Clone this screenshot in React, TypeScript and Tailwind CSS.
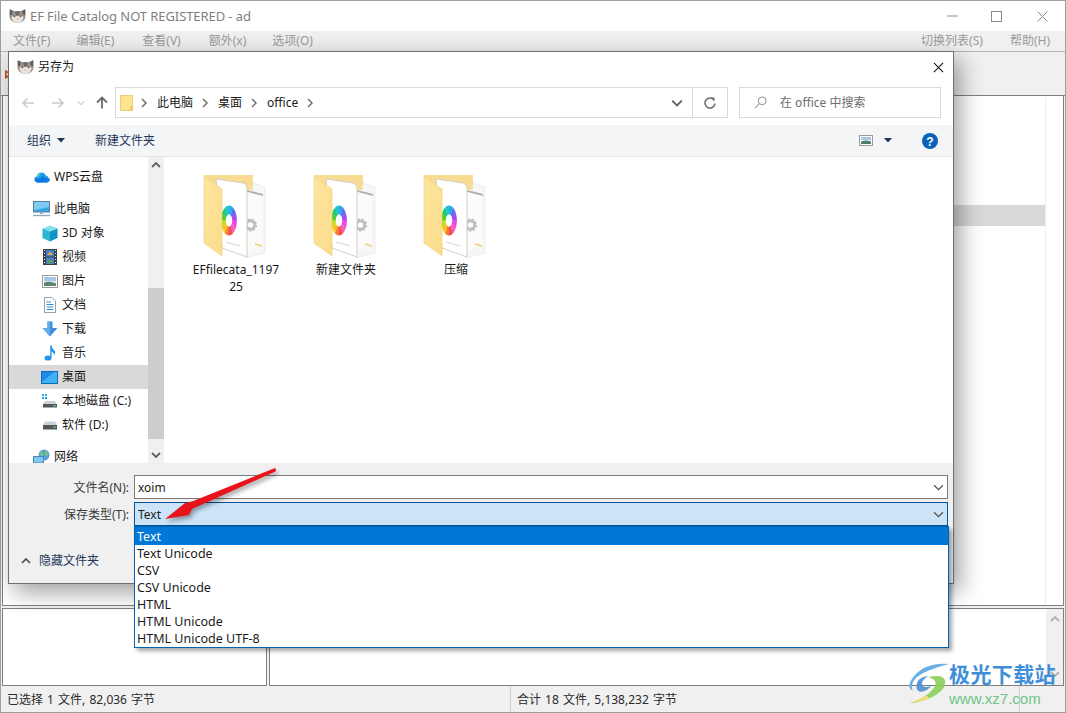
import React from "react";

function Cat({ className }: { className?: string }) {
  return (
    <svg viewBox="0 0 18 16" className={className}>
      <path d="M0.5 0.5 L6 3 H12 L17.5 0.5 L17.5 9 Q16 15 9 15.5 Q2 15 0.5 9 Z" fill="#97908f" />
      <path d="M1 1 L4 3 L3 7 L1 7 Z M17 1 L14 3 L15 7 L17 7 Z" fill="#5f5a5b" />
      <path d="M6.5 3 H11.5 L10.5 7.5 H7.5 Z" fill="#6d6766" />
      <path d="M2.5 9 Q5 7 9 8 Q13 7 15.5 9 Q15 14.5 9 15.5 Q3 14.5 2.5 9 Z" fill="#ece2dc" />
      <circle cx="5.8" cy="8.2" r="1.1" fill="#5d6a4a" />
      <circle cx="12.2" cy="8.2" r="1.1" fill="#5d6a4a" />
      <path d="M8 11 H10 L9 12.2 Z" fill="#c98a8a" />
    </svg>
  );
}

function Chev({ dir = "down", className, color = "#606060", w = 1.5 }: { dir?: "down" | "up" | "right"; className?: string; color?: string; w?: number }) {
  const d = dir === "down" ? "M1 3 L5 7 L9 3" : dir === "up" ? "M1 7 L5 3 L9 7" : "M3 1 L7 5 L3 9";
  return (
    <svg viewBox="0 0 10 10" className={className}>
      <path d={d} fill="none" stroke={color} strokeWidth={w} />
    </svg>
  );
}

function Caret({ className }: { className?: string }) {
  return (
    <svg viewBox="0 0 8 5" className={className}>
      <path d="M0 0 H8 L4 4.5 Z" fill="#1f3352" />
    </svg>
  );
}

const ringColors = ["#29a9f2", "#5d6ff0", "#a548ee", "#ee46e0", "#f55fc0", "#f8485a", "#f6802a", "#f8c520", "#c8dc20", "#4fd02c", "#20c878", "#22c4d0"];

function FolderIcon() {
  const r = 9;
  const seg = ringColors.map((c, i) => {
    const a0 = ((i * 30 - 90) * Math.PI) / 180;
    const a1 = (((i + 1) * 30 - 90 + 2) * Math.PI) / 180;
    return (
      <path
        key={i}
        d={`M${r * Math.cos(a0)} ${r * Math.sin(a0)} A${r} ${r} 0 0 1 ${r * Math.cos(a1)} ${r * Math.sin(a1)}`}
        fill="none"
        stroke={c}
        strokeWidth="7.5"
      />
    );
  });
  return (
    <svg viewBox="0 0 76 91" className="w-[76px] h-[91px] block mx-auto">
      <defs>
        <linearGradient id="flap" x1="0" y1="0" x2="1" y2="1">
          <stop offset="0" stopColor="#fde6a0" />
          <stop offset="1" stopColor="#fbdc8a" />
        </linearGradient>
      </defs>
      <path d="M8 5 H57 V20 H8 Z" fill="#f7dc92" />
      <path d="M57 13 L69 17 V83 L50 88 Z" fill="#f6f6f6" stroke="#e6e6e6" strokeWidth="0.6" />
      <path d="M51 20 L67 24 V26 L51 22 Z" fill="#aeaeae" />
      <path d="M51 22 L66 26 V76 L51 80 Z" fill="#fbfbfb" />
      <path d="M59 73 L66 75 V77 L59 75 Z" fill="#f2d58c" />
      <g transform="translate(54.5 55)">
        <circle r="5" fill="none" stroke="#b9bec2" strokeWidth="3.2" strokeDasharray="2.2 1.2" />
        <circle r="4" fill="none" stroke="#b9bec2" strokeWidth="2.4" />
      </g>
      <path d="M20 9 L47 13 Q51 14 51 18 V87 L26 78 Z" fill="#ffffff" stroke="#d5cfc2" strokeWidth="1" />
      <g transform="translate(33 50.5) scale(0.62 1.18)">{seg}</g>
      <path d="M30 72 L44 76" stroke="#e2e2e2" strokeWidth="1.5" />
      <path d="M8 7 L26 19 V86 L8 73 Z" fill="url(#flap)" />
      <path d="M8 7 L26 19 V86 L8 73 Z" fill="none" stroke="#f2cf78" strokeWidth="0.6" />
    </svg>
  );
}

const Icons: Record<string, React.ReactNode> = {
  wps: (
    <svg viewBox="0 0 16 12" className="w-[16px] h-[12px]">
      <path d="M3.5 11.5 A3.2 3.2 0 0 1 3 5.2 A4.6 4.6 0 0 1 11.8 4.6 A3.6 3.6 0 0 1 12.5 11.5 Z" fill="#1e9ce8" />
      <path d="M3.5 11.5 A3.2 3.2 0 0 1 1 7 Q6 9 9 5 Q11 8 15.8 7.5 A3.6 3.6 0 0 1 12.5 11.5 Z" fill="#0f78e0" />
      <path d="M3 5.2 A4.6 4.6 0 0 1 7.5 2 Q5 4 4 7 Z" fill="#38d4d8" />
    </svg>
  ),
  pc: (
    <svg viewBox="0 0 18 16" className="w-[18px] h-[16px]">
      <rect x="0.5" y="0.5" width="16" height="10.5" fill="#39a7e8" stroke="#5d7d97" />
      <path d="M1 1 H16 V6 L1 9 Z" fill="#7cccf4" />
      <path d="M7 11 H10 V13 H7 Z" fill="#9ab0c0" />
      <path d="M0 14.5 H17" stroke="#93a9bd" strokeWidth="1.4" />
    </svg>
  ),
  cube: (
    <svg viewBox="0 0 16 17" className="w-[16px] h-[17px]">
      <path d="M8 0.5 L15.5 3.5 L8 6.5 L0.5 3.5 Z" fill="#7fe2ea" />
      <path d="M0.5 3.5 L8 6.5 V16.5 L0.5 13 Z" fill="#28b6d2" />
      <path d="M15.5 3.5 L8 6.5 V16.5 L15.5 13 Z" fill="#1492c4" />
    </svg>
  ),
  video: (
    <svg viewBox="0 0 14 16" className="w-[14px] h-[16px]">
      <rect x="0" y="0" width="14" height="16" fill="#3b3f44" />
      <rect x="3" y="1" width="8" height="6.5" fill="#4580d0" />
      <rect x="3" y="8.5" width="8" height="6.5" fill="#4a86c8" />
      <path d="M4 6 L7 2.5 L10 6 Z" fill="#e8a82c" />
      <path d="M4 14 L7 10 L10 14 Z" fill="#60a040" />
      <path d="M1 1.5 H2 M1 4.5 H2 M1 7.5 H2 M1 10.5 H2 M1 13.5 H2 M12 1.5 H13 M12 4.5 H13 M12 7.5 H13 M12 10.5 H13 M12 13.5 H13" stroke="#e6e6e6" strokeWidth="1.2" />
    </svg>
  ),
  pic: (
    <svg viewBox="0 0 16 13" className="w-[16px] h-[13px]">
      <rect x="0.5" y="0.5" width="15" height="12" fill="#fff" stroke="#9a9a9a" />
      <rect x="2" y="2" width="12" height="4.5" fill="#a7c8e6" />
      <rect x="2" y="6.5" width="12" height="4.5" fill="#dbe6e4" />
      <path d="M2 8 Q7 5.5 14 8.5 V11 H2 Z" fill="#5d8470" />
    </svg>
  ),
  doc: (
    <svg viewBox="0 0 14 16" className="w-[14px] h-[16px]">
      <path d="M1.5 0.5 H9 L12.5 4 V15.5 H1.5 Z" fill="#fff" stroke="#9aa0a6" />
      <path d="M3.5 5 H8 M3.5 7.5 H10.5 M3.5 10 H10.5 M3.5 12.5 H10.5" stroke="#2f8fdc" strokeWidth="1.1" />
    </svg>
  ),
  down: (
    <svg viewBox="0 0 16 16" className="w-[16px] h-[16px]">
      <path d="M5.5 0.5 H10.5 V7 H15.5 L8 15.5 L0.5 7 H5.5 Z" fill="#3d8fdc" />
      <path d="M5.5 0.5 H8 V15.5 L0.5 7 H5.5 Z" fill="#62aceb" />
    </svg>
  ),
  music: (
    <svg viewBox="0 0 12 16" className="w-[12px] h-[16px]">
      <ellipse cx="4" cy="13" rx="3.5" ry="2.6" fill="#1f96e8" />
      <path d="M6.2 13 V0.5 H7.5 Q8 4 11 6 Q11.5 8 10.5 10 Q10 7.5 7.5 6.5 V13 Z" fill="#1f96e8" />
    </svg>
  ),
  desk: (
    <svg viewBox="0 0 17 13" className="w-[17px] h-[13px]">
      <rect x="0.5" y="0.5" width="16" height="12" fill="#1c8ae6" stroke="#0d6cc0" />
      <path d="M1 11 L13 1 H16 V12 H1 Z" fill="#3fb2f2" />
    </svg>
  ),
  c: (
    <svg viewBox="0 0 16 14" className="w-[16px] h-[14px]">
      <path d="M0 0 H2 V2 H0 Z M3 0 H5 V2 H3 Z M0 3 H2 V5 H0 Z M3 3 H5 V5 H3 Z" fill="#1ea7ee" />
      <path d="M3 7 H13 L15 10 H1 Z" fill="#cfd2d4" />
      <rect x="1" y="10" width="14" height="3.5" fill="#55585b" />
      <rect x="11.5" y="11" width="2" height="1.4" fill="#6fe06a" />
    </svg>
  ),
  d: (
    <svg viewBox="0 0 16 9" className="w-[16px] h-[9px]">
      <path d="M3 0.5 H13 L15 4 H1 Z" fill="#cfd2d4" />
      <rect x="1" y="4" width="14" height="4.5" fill="#55585b" />
      <rect x="11.5" y="5.5" width="2" height="1.4" fill="#6fe06a" />
    </svg>
  ),
  net: (
    <svg viewBox="0 0 18 16" className="w-[18px] h-[16px]">
      <circle cx="11" cy="6" r="5.5" fill="#5aa0d8" />
      <path d="M8 2 Q11 4 10 7 Q7 7 6 5 Z M12 1 Q16 3 15 7 L12 6 Z" fill="#7cc47c" />
      <rect x="0.5" y="7.5" width="10" height="6.5" fill="#7cc8f2" stroke="#4d86b4" />
      <path d="M3 15 H8" stroke="#4d86b4" />
    </svg>
  ),
};

function NavRow({ icon, label, sub, active, mt }: { icon: string; label: string; sub?: boolean; active?: boolean; mt?: boolean }) {
  return (
    <div className={`h-[24px] flex items-center shrink-0 text-[#1a1a1a] ${active ? "bg-[#d9d9d9]" : ""} ${mt ? "mt-[8px]" : ""} ${sub ? "pl-[28px]" : "pl-[20px]"}`}>
      <span className="w-[25px] flex items-center justify-center shrink-0">{Icons[icon]}</span>
      <span className="whitespace-nowrap">{label}</span>
    </div>
  );
}

function Crumb({ label }: { label: string }) {
  return (
    <>
      <span className="text-[#1a1a1a] whitespace-nowrap ml-[8px] mr-[6px]">{label}</span>
      <Chev dir="right" className="w-[10px] h-[10px] ml-[1px]" color="#707070" w={1.5} />
    </>
  );
}

function Folder({ label }: { label: string }) {
  return (
    <div className="w-[110px] shrink-0">
      <FolderIcon />
      <div className="w-[92px] ml-[11px] text-center break-all leading-[17px] text-[#1a1a1a]">{label}</div>
    </div>
  );
}

const typeOptions = ["Text Unicode", "CSV", "CSV Unicode", "HTML", "HTML Unicode", "HTML Unicode UTF-8"];

function SaveDialog() {
  return (
    <div className="absolute left-[8px] top-[51px] w-[946px] h-[533px] bg-white border border-[#6e7073] shadow-[6px_8px_22px_rgba(0,0,0,0.38)] flex flex-col">
      <div className="h-[30px] flex items-center shrink-0 pl-[8px] pr-[9px]">
        <Cat className="w-[17px] h-[16px]" />
        <span className="ml-[4px] text-[#1a1a1a]">另存为</span>
        <svg viewBox="0 0 12 12" className="w-[11px] h-[11px] ml-auto">
          <path d="M1 1 L11 11 M11 1 L1 11" stroke="#111" strokeWidth="1.1" />
        </svg>
      </div>
      <div className="h-[43px] shrink-0 flex items-center pl-[12px] pr-[12px] pb-[2px]">
        <svg viewBox="0 0 14 12" className="w-[14px] h-[12px]">
          <path d="M13 6 H2 M6.5 1.5 L2 6 L6.5 10.5" fill="none" stroke="#c9c9c9" strokeWidth="1.6" />
        </svg>
        <svg viewBox="0 0 14 12" className="w-[14px] h-[12px] ml-[16px]">
          <path d="M1 6 H12 M7.5 1.5 L12 6 L7.5 10.5" fill="none" stroke="#c9c9c9" strokeWidth="1.6" />
        </svg>
        <Chev className="w-[8px] h-[8px] ml-[12px]" color="#c9c9c9" w={1.3} />
        <svg viewBox="0 0 12 13" className="w-[12px] h-[13px] ml-[11px]">
          <path d="M6 12.5 V2 M1 6.5 L6 1.5 L11 6.5" fill="none" stroke="#6a6a6a" strokeWidth="1.8" />
        </svg>
        <div className="ml-[7px] w-[613px] h-[31px] border border-[#d9d9d9] flex items-center pl-[4px] shrink-0">
          <svg viewBox="0 0 13 16" className="w-[13px] h-[16px] shrink-0">
            <path d="M0.5 0.5 H12.5 V15.5 H0.5 Z" fill="#ffe58f" stroke="#e8c560" strokeWidth="0.8" />
            <path d="M10.5 11 H12.5 V15.5 H10.5 Z" fill="#f1c64c" />
          </svg>
          <span className="w-[6px]" />
          <Chev dir="right" className="w-[10px] h-[10px]" color="#707070" />
          <Crumb label="此电脑" />
          <Crumb label="桌面" />
          <Crumb label="office" />
          <div className="ml-auto flex items-center h-full">
            <Chev className="w-[12px] h-[12px] mr-[9px]" color="#606060" w={1.6} />
            <div className="w-[35px] h-full border-l border-[#d9d9d9] flex items-center justify-center">
              <svg viewBox="0 0 12 12" className="w-[12px] h-[12px]">
                <path d="M10 3 A5 5 0 1 0 11 6.5" fill="none" stroke="#707070" strokeWidth="1.6" />
                <path d="M6.5 0.5 L10.5 0.5 L10.5 4.5 Z" fill="#707070" />
              </svg>
            </div>
          </div>
        </div>
        <div className="ml-[11px] w-[202px] h-[31px] border border-[#d9d9d9] flex items-center pl-[14px] text-[#6d6d6d] shrink-0">
          <svg viewBox="0 0 14 14" className="w-[13px] h-[13px] mr-[13px]">
            <circle cx="8.8" cy="5.2" r="4.2" fill="none" stroke="#8a8a8a" strokeWidth="1" />
            <path d="M5.8 8.2 L1 13" stroke="#b89c8a" strokeWidth="1.2" />
          </svg>
          在 office 中搜索
        </div>
      </div>
      <div className="h-[32px] shrink-0 bg-[#f4f5f7] border-b border-[#e6e6e6] flex items-center pl-[18px] pr-[15px] text-[#1e395b]">
        <span>组织</span>
        <Caret className="w-[8px] h-[5px] ml-[6px]" />
        <span className="ml-[30px]">新建文件夹</span>
        <svg viewBox="0 0 14 11" className="w-[14px] h-[11px] ml-auto">
          <rect x="0.5" y="0.5" width="13" height="10" fill="#fff" stroke="#9a9a9a" />
          <rect x="2" y="2" width="10" height="3" fill="#a7c8e6" />
          <path d="M2 6.5 Q7 4.5 12 6.5 V9 H2 Z" fill="#4f7f6a" />
        </svg>
        <Caret className="w-[8px] h-[5px] ml-[11px]" />
        <svg viewBox="0 0 16 16" className="w-[16px] h-[16px] ml-[30px]">
          <circle cx="8" cy="8" r="8" fill="#0a62b8" />
          <text x="8" y="12.5" textAnchor="middle" fontSize="12" fontWeight="700" fill="#fff" fontFamily="'Liberation Sans',sans-serif">?</text>
        </svg>
      </div>
      <div className="h-[306px] shrink-0 flex">
        <div className="w-[139px] shrink-0 overflow-hidden flex flex-col pt-[8px]">
          <NavRow icon="wps" label="WPS云盘" />
          <NavRow icon="pc" label="此电脑" mt />
          <NavRow icon="cube" label="3D 对象" sub />
          <NavRow icon="video" label="视频" sub />
          <NavRow icon="pic" label="图片" sub />
          <NavRow icon="doc" label="文档" sub />
          <NavRow icon="down" label="下载" sub />
          <NavRow icon="music" label="音乐" sub />
          <NavRow icon="desk" label="桌面" sub active />
          <NavRow icon="c" label="本地磁盘 (C:)" sub />
          <NavRow icon="d" label="软件 (D:)" sub />
          <NavRow icon="net" label="网络" mt />
        </div>
        <div className="w-[16px] shrink-0 bg-[#f0f0f0] flex flex-col">
          <div className="h-[16px] flex items-center justify-center">
            <Chev dir="up" className="w-[10px] h-[10px]" color="#606060" w={1.8} />
          </div>
          <div className="h-[115px]" />
          <div className="h-[151px] bg-[#cdcdcd]" />
          <div className="flex-1 flex items-center justify-center pt-[8px]">
            <Chev className="w-[10px] h-[10px]" color="#606060" w={1.8} />
          </div>
        </div>
        <div className="flex-1 ml-[2px] flex pt-[13px] pl-[13px] items-start">
          <Folder label="EFfilecata_119725" />
          <Folder label="新建文件夹" />
          <Folder label="压缩" />
        </div>
      </div>
      <div className="flex-1 bg-[#f0f0f0] relative flex flex-col pt-[12px] pr-[5px]">
        <div className="flex items-center h-[24px]">
          <span className="w-[120px] pt-[2px] text-right text-[#3a3a3a] shrink-0">文件名(N):</span>
          <div className="ml-[5px] flex-1 h-[24px] bg-white border border-[#7a7a7a] flex items-center pl-[3px] pr-[3px] text-[#1a1a1a]">
            <span className="pt-px">xoim</span>
            <Chev className="w-[11px] h-[11px] ml-auto" color="#505050" w={1.1} />
          </div>
        </div>
        <div className="flex items-center h-[24px] mt-[3px]">
          <span className="w-[120px] pt-px text-right text-[#3a3a3a] shrink-0">保存类型(T):</span>
          <div className="ml-[5px] flex-1 h-[24px] bg-[#cce4f7] border border-[#005499] flex items-center pl-[3px] pr-[3px] text-[#1a1a1a]">
            <span className="pt-px">Text</span>
            <Chev className="w-[11px] h-[11px] ml-auto" color="#505050" w={1.1} />
          </div>
        </div>
        <div className="flex items-center pl-[12px] mt-[27px] text-[#1e395b]">
          <Chev dir="up" className="w-[10px] h-[10px]" color="#505050" w={1.7} />
          <span className="ml-[8px]">隐藏文件夹</span>
        </div>
      </div>
    </div>
  );
}

function Dropdown() {
  return (
    <div className="absolute left-[134px] top-[526px] w-[815px] h-[122px] bg-white border border-[#0063b1] shadow-[3px_3px_4px_rgba(0,0,0,0.35)] flex flex-col text-[#1a1a1a] text-[12.5px]">
      <div className="h-[18px] bg-[#0078d7] text-white pl-[2px] pt-px flex items-center shrink-0">Text</div>
      {typeOptions.map((o) => (
        <div key={o} className="h-[17px] pl-[2px] flex items-center shrink-0">{o}</div>
      ))}
    </div>
  );
}

function RedArrow() {
  return (
    <svg viewBox="0 0 130 70" className="absolute left-[155px] top-[460px] w-[130px] h-[70px] drop-shadow-[2px_3px_2px_rgba(0,0,0,0.35)]">
      <path d="M120 8 Q121.5 9.5 120.5 11.5 L37 49 L34 55 L10 59 L30 43 L37 41.5 Z" fill="#e8141c" />
    </svg>
  );
}

function Watermark() {
  return (
    <div className="absolute left-[906px] top-[661px] w-[160px] h-[46px] flex">
      <svg viewBox="0 0 44 44" className="w-[44px] h-[42px] shrink-0 opacity-90 mt-px">
        <path d="M44 2 Q20 0 8 14 Q-2 26 6 30 Q2 20 16 12 Q28 6 44 2 Z" fill="#5aa7e2" />
        <path d="M10 26 Q10 16 22 15 Q14 20 16 25 Q20 28 26 24 Q20 32 13 31 Q10 30 10 26 Z" fill="#4a8fd0" />
        <path d="M22 16 Q38 12 40 20 Q41 30 24 38 Q12 43 3 43 Q24 36 30 24 Q31 18 22 16 Z" fill="#8ccf5a" />
        <path d="M3 43 Q14 42 24 38 L20 35 Q10 40 3 43 Z" fill="#f0dc6a" />
      </svg>
      <div className="ml-[-1px] flex flex-col">
        <span className="text-[21px] leading-[26px] font-bold text-[#3f8fd8] tracking-[0.4px] whitespace-nowrap">极光下载站</span>
        <span className="text-[15px] leading-[18px] font-medium text-[#71c489] mt-[3px] whitespace-nowrap font-['Liberation_Sans',sans-serif]">www.xz7.com</span>
      </div>
    </div>
  );
}

function MainWindow() {
  return (
    <div className="w-full h-full bg-[#f0f0f0] border border-[#a0a0a0] flex flex-col text-[#9a9a9a]">
      <div className="h-[30px] bg-white shrink-0 flex items-center pl-[8px]">
        <Cat className="w-[17px] h-[16px]" />
        <span className="ml-[4px] text-[13px] tracking-[-0.08px] text-[#7f7f7f]">EF File Catalog NOT REGISTERED - ad</span>
        <div className="ml-auto flex items-center">
          <svg viewBox="0 0 12 12" className="w-[12px] h-[12px]"><path d="M1 6 H12" stroke="#8a8a8a" /></svg>
          <svg viewBox="0 0 11 11" className="w-[11px] h-[11px] ml-[33px]"><rect x="0.5" y="0.5" width="10" height="10" fill="none" stroke="#8a8a8a" /></svg>
          <svg viewBox="0 0 11 11" className="w-[11px] h-[11px] ml-[35px] mr-[17px]"><path d="M0.5 0.5 L10.5 10.5 M10.5 0.5 L0.5 10.5" stroke="#8a8a8a" /></svg>
        </div>
      </div>
      <div className="h-[20px] shrink-0 flex items-center pl-[12px] pr-[15px]">
        <span>文件(F)</span>
        <span className="ml-[26px]">编辑(E)</span>
        <span className="ml-[28px]">查看(V)</span>
        <span className="ml-[28px]">额外(x)</span>
        <span className="ml-[26px]">选项(O)</span>
        <span className="ml-auto">切换列表(S)</span>
        <span className="ml-[27px]">帮助(H)</span>
      </div>
      <div className="h-[45px] shrink-0 border-t border-[#b8b8b8] border-b border-b-[#808080] flex items-center pl-[4px]">
        <svg viewBox="0 0 4 10" className="w-[4px] h-[10px]"><path d="M0 1 L4 3 L1 5 L4 8 L0 10 Z" fill="#d8501c" /></svg>
      </div>
      <div className="flex-1 bg-white border-l border-r border-b border-[#808080] ml-px mr-px flex flex-col relative">
        <div className="flex-1 flex flex-col pt-[109px] pr-[17px] pl-[270px]">
          <div className="h-[21px] bg-[#d9d9d9]" />
        </div>
        <div className="absolute right-[17px] top-[1px] bottom-[1px] w-px bg-[#e6eef4]" />
      </div>
      <div className="h-[2px] shrink-0" />
      <div className="h-[78px] shrink-0 flex border-t border-[#808080] ml-px mr-px">
        <div className="w-[265px] bg-white border-l border-r border-b border-[#808080]" />
        <div className="flex-1 ml-[2px] bg-white border-l border-r border-b border-[#808080] flex justify-end">
          <div className="w-[17px] bg-[#f0f0f0] flex flex-col items-center pt-[5px] pb-[6px]">
            <Chev dir="up" className="w-[10px] h-[10px]" color="#b0b0b0" w={1.8} />
            <Chev className="w-[10px] h-[10px] mt-auto" color="#b0b0b0" w={1.8} />
          </div>
        </div>
      </div>
      <div className="h-[26px] shrink-0 flex items-center text-[#2a2a2a] [word-spacing:1px]">
        <div className="w-[510px] pl-[6px] pt-[2px] border-r border-[#cfcfcf] h-full flex items-center">已选择 1 文件, 82,036 字节</div>
        <div className="w-[509px] pl-[6px] pt-[2px] border-r border-[#cfcfcf] h-full flex items-center">合计 18 文件, 5,138,232 字节</div>
      </div>
    </div>
  );
}

export default function App() {
  return (
    <div className="relative w-[1066px] h-[713px] overflow-hidden text-[12px] leading-[16px] font-['Noto_Sans','Noto_Sans_CJK_SC',sans-serif]">
      <MainWindow />
      <SaveDialog />
      <Dropdown />
      <RedArrow />
      <Watermark />
    </div>
  );
}
